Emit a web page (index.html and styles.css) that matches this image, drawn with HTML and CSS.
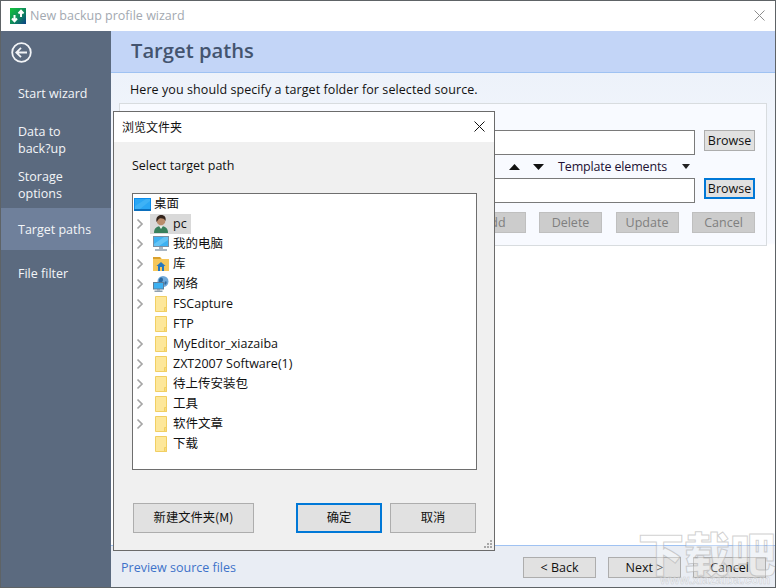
FILE: index.html
```html
<!DOCTYPE html>
<html lang="zh">
<head>
<meta charset="utf-8">
<title>New backup profile wizard</title>
<link rel="stylesheet" href="styles.css">
</head>
<body>
<svg class="defs" width="0" height="0" aria-hidden="true">
  <symbol id="folder" viewBox="0 0 12 16">
    <path d="M.5.5h11v15H.5z" fill="#fde79a" stroke="#f1cf63"/>
    <path d="M9.5 11.5h2v4h-2z" fill="#fbdc7c" stroke="#f1cf63"/>
  </symbol>
  <symbol id="chev" viewBox="0 0 8 12">
    <path d="M1.5 1.5 6 6l-4.500 4.500" fill="none" stroke="#a6a6a6" stroke-width="1.700"/>
  </symbol>
</svg>
<div class="window">
  <header class="titlebar">
    <svg class="app-icon" width="16" height="16" viewBox="0 0 16 16">
      <defs><linearGradient id="ag" x1="0" y1="0" x2="1" y2="1"><stop offset="0" stop-color="#12c43a"/><stop offset=".55" stop-color="#0f8a5c"/><stop offset="1" stop-color="#0d3f87"/></linearGradient></defs>
      <rect width="16" height="16" fill="url(#ag)"/>
      <path d="M4.500 13V7M2 10.500l2.500 2.700L7 10.500M11 9V3M8.500 5.500 11 2.800l2.500 2.700" fill="none" stroke="#fff" stroke-width="2"/>
    </svg>
    <span class="title-text">New backup profile wizard</span>
    <svg class="title-close" width="11" height="11" viewBox="0 0 11 11"><path d="M.5.500l10 10M10.500.500l-10 10" stroke="#8d8d8d" fill="none"/></svg>
  </header>
  <div class="body">
    <aside class="sidebar">
      <svg class="back" width="21" height="21" viewBox="0 0 21 21">
        <circle cx="10.500" cy="10.500" r="9.300" fill="none" stroke="#f2f4f7" stroke-width="1.800"/>
        <path d="M16 10.500H5.500M10 5.800l-4.700 4.700 4.700 4.700" fill="none" stroke="#f2f4f7" stroke-width="1.800"/>
      </svg>
      <nav class="nav">
        <div class="nav-item nav-start">Start wizard</div>
        <div class="nav-item nav-data">Data to<br>back?up</div>
        <div class="nav-item nav-storage">Storage<br>options</div>
        <div class="nav-item nav-target">Target paths</div>
        <div class="nav-item nav-filter">File filter</div>
      </nav>
    </aside>
    <main class="main">
      <div class="banner">Target paths</div>
      <div class="content">
        <p class="intro">Here you should specify a target folder for selected source.</p>
        <section class="group">
          <div class="row row-first">
            <div class="input"></div>
            <button class="btn btn-browse">Browse</button>
          </div>
          <div class="tools">
            <svg width="11" height="6" viewBox="0 0 11 6"><path d="M5.500 0 11 6H0z" fill="#111"/></svg>
            <svg width="11" height="6" viewBox="0 0 11 6"><path d="M0 0h11L5.500 6z" fill="#111"/></svg>
            <span class="tpl">Template elements</span>
            <svg width="8" height="5" viewBox="0 0 8 5"><path d="M0 0h8L4 5z" fill="#222"/></svg>
          </div>
          <div class="row">
            <div class="input"></div>
            <button class="btn btn-browse btn-focus">Browse</button>
          </div>
          <div class="actions">
            <button class="btn btn-off">Add</button>
            <button class="btn btn-off">Delete</button>
            <button class="btn btn-off">Update</button>
            <button class="btn btn-off">Cancel</button>
          </div>
        </section>
      </div>
      <footer class="footer">
        <a class="preview">Preview source files</a>
        <div class="footer-btns">
          <button class="btn btn-foot">&lt; Back</button>
          <button class="btn btn-foot">Next &gt;</button>
          <button class="btn btn-foot">Cancel</button>
        </div>
      </footer>
    </main>
  </div>

  <div class="dialog">
    <div class="dlg-title">
      <span>浏览文件夹</span>
      <svg width="11" height="11" viewBox="0 0 11 11"><path d="M.5.500l10 10M10.500.500l-10 10" stroke="#111" fill="none"/></svg>
    </div>
    <div class="dlg-body">
      <div class="dlg-prompt">Select target path</div>
      <div class="tree">
        <div class="tree-row tree-root">
          <svg class="tree-ico-root" width="17" height="13" viewBox="0 0 17 13">
            <rect width="17" height="12" fill="#0a8cec"/><rect x="1" y="1" width="15" height="10" fill="#2aa7f5"/><rect y="11" width="17" height="2" fill="#0b6fbd"/><path d="M1 8 12 1h4v2L6 11H1z" fill="#52bdf8" opacity=".5"/>
          </svg>
          <span class="zh">桌面</span>
        </div>
        <div class="tree-row"><svg class="chev"><use href="#chev"/></svg><div class="hl">
          <svg class="ico" width="16" height="18" viewBox="0 0 16 18"><path d="M1 18c0-5 3-7 7-7s7 2 7 7z" fill="#38805c"/><path d="M6 11l2 3 2-3z" fill="#e8efe9"/><circle cx="8" cy="6" r="4.300" fill="#b98c6c"/><path d="M3.500 7C2.500 1.500 6 0 8.500 0S13.500 2 12.500 6c-1-2.500-4-3-6-2.500-1 .5-2 2-3 3.500z" fill="#33241c"/></svg>
          <span>pc</span></div></div>
        <div class="tree-row"><svg class="chev"><use href="#chev"/></svg>
          <svg class="ico" width="16" height="16" viewBox="0 0 16 16"><rect x=".5" y=".5" width="15" height="10" fill="#3db1f2" stroke="#7b8fa3"/><path d="M1 8 11 1h4v3L6 10H1z" fill="#7fd0f8" opacity=".6"/><rect x="6" y="11" width="4" height="2" fill="#a9b6c2"/><rect x="2" y="13" width="12" height="2" fill="#a9b6c2"/></svg>
          <span class="zh">我的电脑</span></div>
        <div class="tree-row"><svg class="chev"><use href="#chev"/></svg>
          <svg class="ico" width="16" height="14" viewBox="0 0 16 14"><path d="M0 0h7l2 2h7v12H0z" fill="#f6c75a"/><path d="M0 0h7l1 2H0z" fill="#d9a02d"/><path d="M8 5 3.500 9H5v5h6V9h1.500z" fill="#2778bd"/><rect x="7" y="10" width="2" height="4" fill="#f6c75a"/></svg>
          <span class="zh">库</span></div>
        <div class="tree-row"><svg class="chev"><use href="#chev"/></svg>
          <svg class="ico" width="16" height="16" viewBox="0 0 16 16"><circle cx="10" cy="5.500" r="5.500" fill="#6fa8d8"/><path d="M7 2c2-1 3 0 3 2s-2 2-3 3-2-3 0-5zm6 3c1 1 1 3-1 4-1-1-1-3 1-4z" fill="#2c6aa0"/><rect x=".5" y="6.500" width="10" height="6.500" fill="#3db1f2" stroke="#5f7f99"/><rect x="4" y="13" width="3" height="1.500" fill="#8fa0ae"/><rect x="1.500" y="14.500" width="8" height="1.500" fill="#8fa0ae"/></svg>
          <span class="zh">网络</span></div>
        <div class="tree-row"><svg class="chev"><use href="#chev"/></svg><svg class="folder"><use href="#folder"/></svg><span>FSCapture</span></div>
        <div class="tree-row"><span class="chev"></span><svg class="folder"><use href="#folder"/></svg><span>FTP</span></div>
        <div class="tree-row"><svg class="chev"><use href="#chev"/></svg><svg class="folder"><use href="#folder"/></svg><span>MyEditor_xiazaiba</span></div>
        <div class="tree-row"><svg class="chev"><use href="#chev"/></svg><svg class="folder"><use href="#folder"/></svg><span>ZXT2007 Software(1)</span></div>
        <div class="tree-row"><svg class="chev"><use href="#chev"/></svg><svg class="folder"><use href="#folder"/></svg><span class="zh">待上传安装包</span></div>
        <div class="tree-row"><svg class="chev"><use href="#chev"/></svg><svg class="folder"><use href="#folder"/></svg><span class="zh">工具</span></div>
        <div class="tree-row"><svg class="chev"><use href="#chev"/></svg><svg class="folder"><use href="#folder"/></svg><span class="zh">软件文章</span></div>
        <div class="tree-row"><span class="chev"></span><svg class="folder"><use href="#folder"/></svg><span class="zh">下载</span></div>
      </div>
      <div class="dlg-btns">
        <button class="btn btn-dlg btn-new">新建文件夹(M)</button>
        <button class="btn btn-dlg btn-ok">确定</button>
        <button class="btn btn-dlg btn-cancel">取消</button>
      </div>
    </div>
    <svg class="grip" width="9" height="9" viewBox="0 0 9 9"><path d="M6 0h2v2H6zM3 3h2v2H3zM6 3h2v2H6zM0 6h2v2H0zM3 6h2v2H3zM6 6h2v2H6z" fill="#a8a8a8"/></svg>
  </div>

  <div class="watermark"><div class="wm-big">下载吧</div><div class="wm-small">www.xiazaiba.com</div></div>
</div>
</body>
</html>
```
FILE: styles.css
```css
* { box-sizing: border-box; }
html, body { height: 100%; }
body {
  margin: 0;
  overflow: hidden;
  background: #5e6366;
  font-family: "Open Sans", "Noto Sans CJK SC", sans-serif;
  font-size: 12.5px;
  color: #111;
}
.defs { position: absolute; }
button { font: inherit; color: inherit; padding: 0; }

.window {
  position: relative;
  margin: 1px;
  width: 774px;
  height: 586px;
  display: flex;
  flex-direction: column;
  background: #fff;
  overflow: hidden;
}
.titlebar {
  height: 30px;
  flex: none;
  display: flex;
  align-items: center;
  padding: 0 10px 1px 9px;
  background: #fff;
}
.app-icon { flex: none; margin-right: 4px; }
.title-text { color: #a3a9b1; font-size: 12.5px; }
.title-close { margin-left: auto; }

.body { flex: 1; display: flex; min-height: 0; }

.sidebar {
  width: 110px;
  flex: none;
  background: #5b6a7f;
  color: #f3f5f8;
  padding-top: 11px;
}
.back { display: block; margin-left: 10px; }
.nav { margin-top: 9px; }
.nav-item { padding-left: 17px; display: flex; align-items: center; line-height: 17px; }
.nav-start { height: 42px; }
.nav-data { height: 51px; }
.nav-storage { height: 39px; margin-bottom: 4px; }
.nav-target { height: 42px; background: #6f809b; margin-bottom: 2px; }
.nav-filter { height: 42px; }

.main { flex: 1; display: flex; flex-direction: column; min-width: 0; background: #fff; }
.banner {
  height: 42px;
  flex: none;
  background: #c3d5f7;
  border-bottom: 1px solid #9fc2f2;
  padding-left: 20px;
  color: #44546f;
  font-size: 20.2px;
  font-weight: 600;
  line-height: 38px;
}
.content {
  flex: 1;
  padding: 8px 8px 0;
  background: linear-gradient(#edf2fa, #f8faff 170px, #fff 172px);
}
.intro { margin: 0 0 4px 11px; line-height: 18px; height: 18px; letter-spacing: .08px; }
.group {
  height: 143px;
  border: 1px solid #d8dcdf;
  padding: 26px 11px 0 8px;
  background: #f8faff;
}
.row { display: flex; align-items: flex-start; gap: 9px; }
.input { flex: 1; height: 25px; background: #fff; border: 1px solid #7a7a7a; }
.btn { background: #e1e1e1; border: 1px solid #adadad; height: 21px; }
.btn-browse { width: 51px; height: 21px; padding-bottom: 1px; }
.btn-focus { border: 2px solid #0078d7; }
.tools {
  height: 23px;
  display: flex;
  align-items: center;
  justify-content: flex-end;
  padding-right: 65px;
  color: #221133;
}
.tools svg:nth-child(2) { margin-left: 13px; }
.tpl { margin: 0 15px 0 14px; letter-spacing: -.17px; padding-bottom: 1px; }
.actions { display: flex; justify-content: flex-end; gap: 13.500px; margin-top: 9px; }
.btn-off { width: 63px; background: #cccccc; border-color: #bfbfbf; color: #7f7f7f; }

.footer {
  height: 42px;
  flex: none;
  display: flex;
  align-items: center;
  justify-content: space-between;
  padding: 1px 9px 0 10px;
  background: #e9edf4;
  border-top: 1px solid #9fc2f2;
}
.preview { color: #3d72c9; }
.footer-btns { display: flex; gap: 12px; }
.btn-foot { width: 73px; }

.dialog {
  position: absolute;
  left: 112px;
  top: 110px;
  width: 382px;
  height: 440px;
  background: #f0f0f0;
  border: 1px solid #6b6b6b;
  display: flex;
  flex-direction: column;
  font-size: 12.5px;
}
.dlg-title {
  height: 30px;
  flex: none;
  background: #fff;
  display: flex;
  align-items: center;
  justify-content: space-between;
  padding: 0 9px 2px 8px;
  font-size: 12px;
  font-family: "Noto Sans CJK SC", sans-serif;
}
.dlg-body { flex: 1; padding: 0 17px 0 18px; display: flex; flex-direction: column; }
.dlg-prompt { height: 51px; padding-top: 15px; line-height: 18px; }
.tree {
  height: 277px;
  background: #fff;
  border: 1px solid #6e6e6e;
  flex: none;
}
.tree-row { height: 20px; display: flex; align-items: center; }
.tree-row span { white-space: nowrap; margin-bottom: 2px; }
.tree-row .zh { margin-bottom: 4px; }
.tree-root { padding-left: 1px; }
.tree-root .zh { margin-left: 3px; }
.tree-ico-root { flex: none; }
.tree-row .chev { width: 8px; height: 12px; flex: none; margin: 0 9px 0 3px; display: block; }
.hl { display: flex; align-items: center; width: 41px; height: 20px; background: #d9d9d9; margin-left: -3px; padding-left: 3px; }
.ico { flex: none; margin-right: 4px; }
.folder { width: 12px; height: 16px; flex: none; margin: 0 6px 0 2px; }
.dlg-btns { display: flex; margin-top: 33px; padding-left: 1px; }
.btn-dlg { height: 30px; padding-bottom: 3px; font-family: "Noto Sans CJK SC", sans-serif; font-size: 12.3px; }
.btn-new { width: 121px; margin-right: 42px; }
.btn-ok { width: 86px; margin-right: 8px; border: 2px solid #0078d7; }
.btn-cancel { width: 86px; }
.grip { position: absolute; right: 1px; bottom: 1px; }

.watermark {
  position: absolute;
  right: -1px;
  bottom: 0;
  width: 138px;
  pointer-events: none;
  font-family: "Noto Sans CJK SC", sans-serif;
}
.wm-big {
  font-size: 46px;
  line-height: 42px;
  font-weight: 900;
  white-space: nowrap;
  margin-bottom: 2px;
  color: rgba(255,255,255,.35);
  -webkit-text-stroke: 1px rgba(170,170,170,.55);
}
.wm-small {
  font-family: "Liberation Sans", sans-serif;
  font-size: 12.500px;
  line-height: 13px;
  font-weight: 700;
  white-space: nowrap;
  padding-left: 22px;
  color: rgba(255,255,255,.35);
  -webkit-text-stroke: .5px rgba(170,170,170,.5);
}
```
